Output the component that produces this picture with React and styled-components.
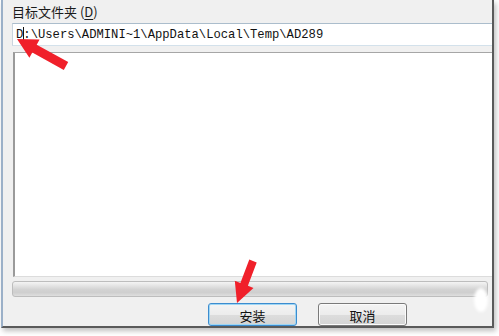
import React from 'react';
import styled, { createGlobalStyle } from 'styled-components';

const GlobalStyle = createGlobalStyle`
  html, body {
    margin: 0;
    padding: 0;
    background: #ffffff;
  }
`;

// polygon points for a fat arrow from tail to tip
const arrowPoints = (tail, tip, shaft, headLen, headWidth) => {
  const dx = tip[0] - tail[0];
  const dy = tip[1] - tail[1];
  const len = Math.hypot(dx, dy);
  const ux = dx / len;
  const uy = dy / len;
  const nx = -uy;
  const ny = ux;
  const bx = tip[0] - ux * headLen;
  const by = tip[1] - uy * headLen;
  const p = [
    [tail[0] + (nx * shaft) / 2, tail[1] + (ny * shaft) / 2],
    [bx + (nx * shaft) / 2, by + (ny * shaft) / 2],
    [bx + (nx * headWidth) / 2, by + (ny * headWidth) / 2],
    tip,
    [bx - (nx * headWidth) / 2, by - (ny * headWidth) / 2],
    [bx - (nx * shaft) / 2, by - (ny * shaft) / 2],
    [tail[0] - (nx * shaft) / 2, tail[1] - (ny * shaft) / 2],
  ];
  return p.map((q) => q.map((v) => v.toFixed(1)).join(',')).join(' ');
};

const App = () => {
  return (
    <>
      <GlobalStyle />
      <Stage>
        <Frame>
          <Label>
            目标文件夹 (<u>D</u>)
          </Label>
          <PathBox>
            <span>D</span>
            <Caret />
            <span>:\Users\ADMINI~1\AppData\Local\Temp\AD289</span>
          </PathBox>
          <ListBox />
          <Progress />
          <ButtonRow>
            <Button $focused>安装</Button>
            <Button>取消</Button>
          </ButtonRow>
        </Frame>
        <Glare />
        <Arrows width="499" height="336" viewBox="0 0 499 336">
          <polygon
            points={arrowPoints([66, 66], [17, 39], 9, 20, 21)}
            fill="#f0202a"
          />
          <polygon
            points={arrowPoints([253, 261], [237, 303], 8, 20, 20)}
            fill="#f0202a"
          />
        </Arrows>
      </Stage>
    </>
  );
};

export default App;

const Stage = styled.div`
  position: relative;
  width: 499px;
  height: 336px;
  overflow: hidden;
  background: #ffffff;
`;

const Frame = styled.div`
  box-sizing: border-box;
  margin-left: 1px;
  width: 493px;
  height: 328px;
  background: #f0f0f0;
  border-left: 2px solid #9bb0c8;
  border-right: 2px solid #5a5a5a;
  border-bottom: 2px solid #5a5a5a;
  box-shadow: 2px 3px 5px rgba(0, 0, 0, 0.25);
  overflow: hidden;
  display: flex;
  flex-direction: column;
  padding: 4px 0 0 9px;
`;

const Label = styled.div`
  font-family: 'Noto Sans CJK SC', 'Noto Sans', sans-serif;
  font-size: 13px;
  line-height: 16px;
  color: #1a1a1a;
  u {
    text-decoration: underline;
    text-underline-offset: 2px;
  }
`;

const PathBox = styled.div`
  margin-top: 3px;
  margin-right: -4px;
  height: 24px;
  box-sizing: border-box;
  background: #ffffff;
  border: 1px solid #abbdcc;
  border-bottom-color: #d3e1eb;
  border-left-color: #c9d4dd;
  display: flex;
  align-items: center;
  padding-left: 3px;
  font-family: 'Liberation Mono', 'DejaVu Sans Mono', monospace;
  font-size: 12.2px;
  color: #111111;
  white-space: nowrap;
`;

const Caret = styled.i`
  display: inline-block;
  width: 1px;
  height: 15px;
  background: #111111;
  margin: 0 -1px 0 0;
`;

const ListBox = styled.div`
  margin: 6px -4px 0 1px;
  height: 231px;
  box-sizing: border-box;
  background: #ffffff;
  border: 1px solid #a6a6a6;
  border-left: 2px solid #9a9a9a;
  border-bottom-color: #dcdcdc;
`;

const Progress = styled.div`
  margin: 4px 4px 0 0;
  height: 16px;
  box-sizing: border-box;
  border: 1px solid #bdbdbd;
  border-radius: 3px;
  background: linear-gradient(
    #f4f4f4 0%,
    #e2e2e2 30%,
    #d2d2d2 55%,
    #cfcfcf 75%,
    #dedede 100%
  );
`;

const ButtonRow = styled.div`
  display: flex;
  gap: 21px;
  margin: 6px 0 0 196px;
`;

const Button = styled.div`
  box-sizing: border-box;
  width: 89px;
  height: 23px;
  border-radius: 3px;
  border: 1px solid ${({ $focused }) => ($focused ? '#3c8ccf' : '#7a7a7a')};
  box-shadow: ${({ $focused }) =>
    $focused ? 'inset 0 0 0 1px #9fd6f4' : 'inset 0 0 0 1px #fbfbfb'};
  background: linear-gradient(#f4f4f4 0%, #ececec 50%, #dddddd 51%, #d4d4d4 100%);
  display: flex;
  align-items: center;
  justify-content: center;
  padding-top: 2px;
  font-family: 'Noto Sans CJK SC', 'Noto Sans', sans-serif;
  font-size: 13px;
  color: #111111;
`;

const Glare = styled.div`
  position: absolute;
  left: 474px;
  top: 288px;
  width: 14px;
  height: 24px;
  border-radius: 50%;
  background: #ffffff;
  filter: blur(1.5px);
`;

const Arrows = styled.svg`
  position: absolute;
  left: 0;
  top: 0;
  pointer-events: none;
`;
